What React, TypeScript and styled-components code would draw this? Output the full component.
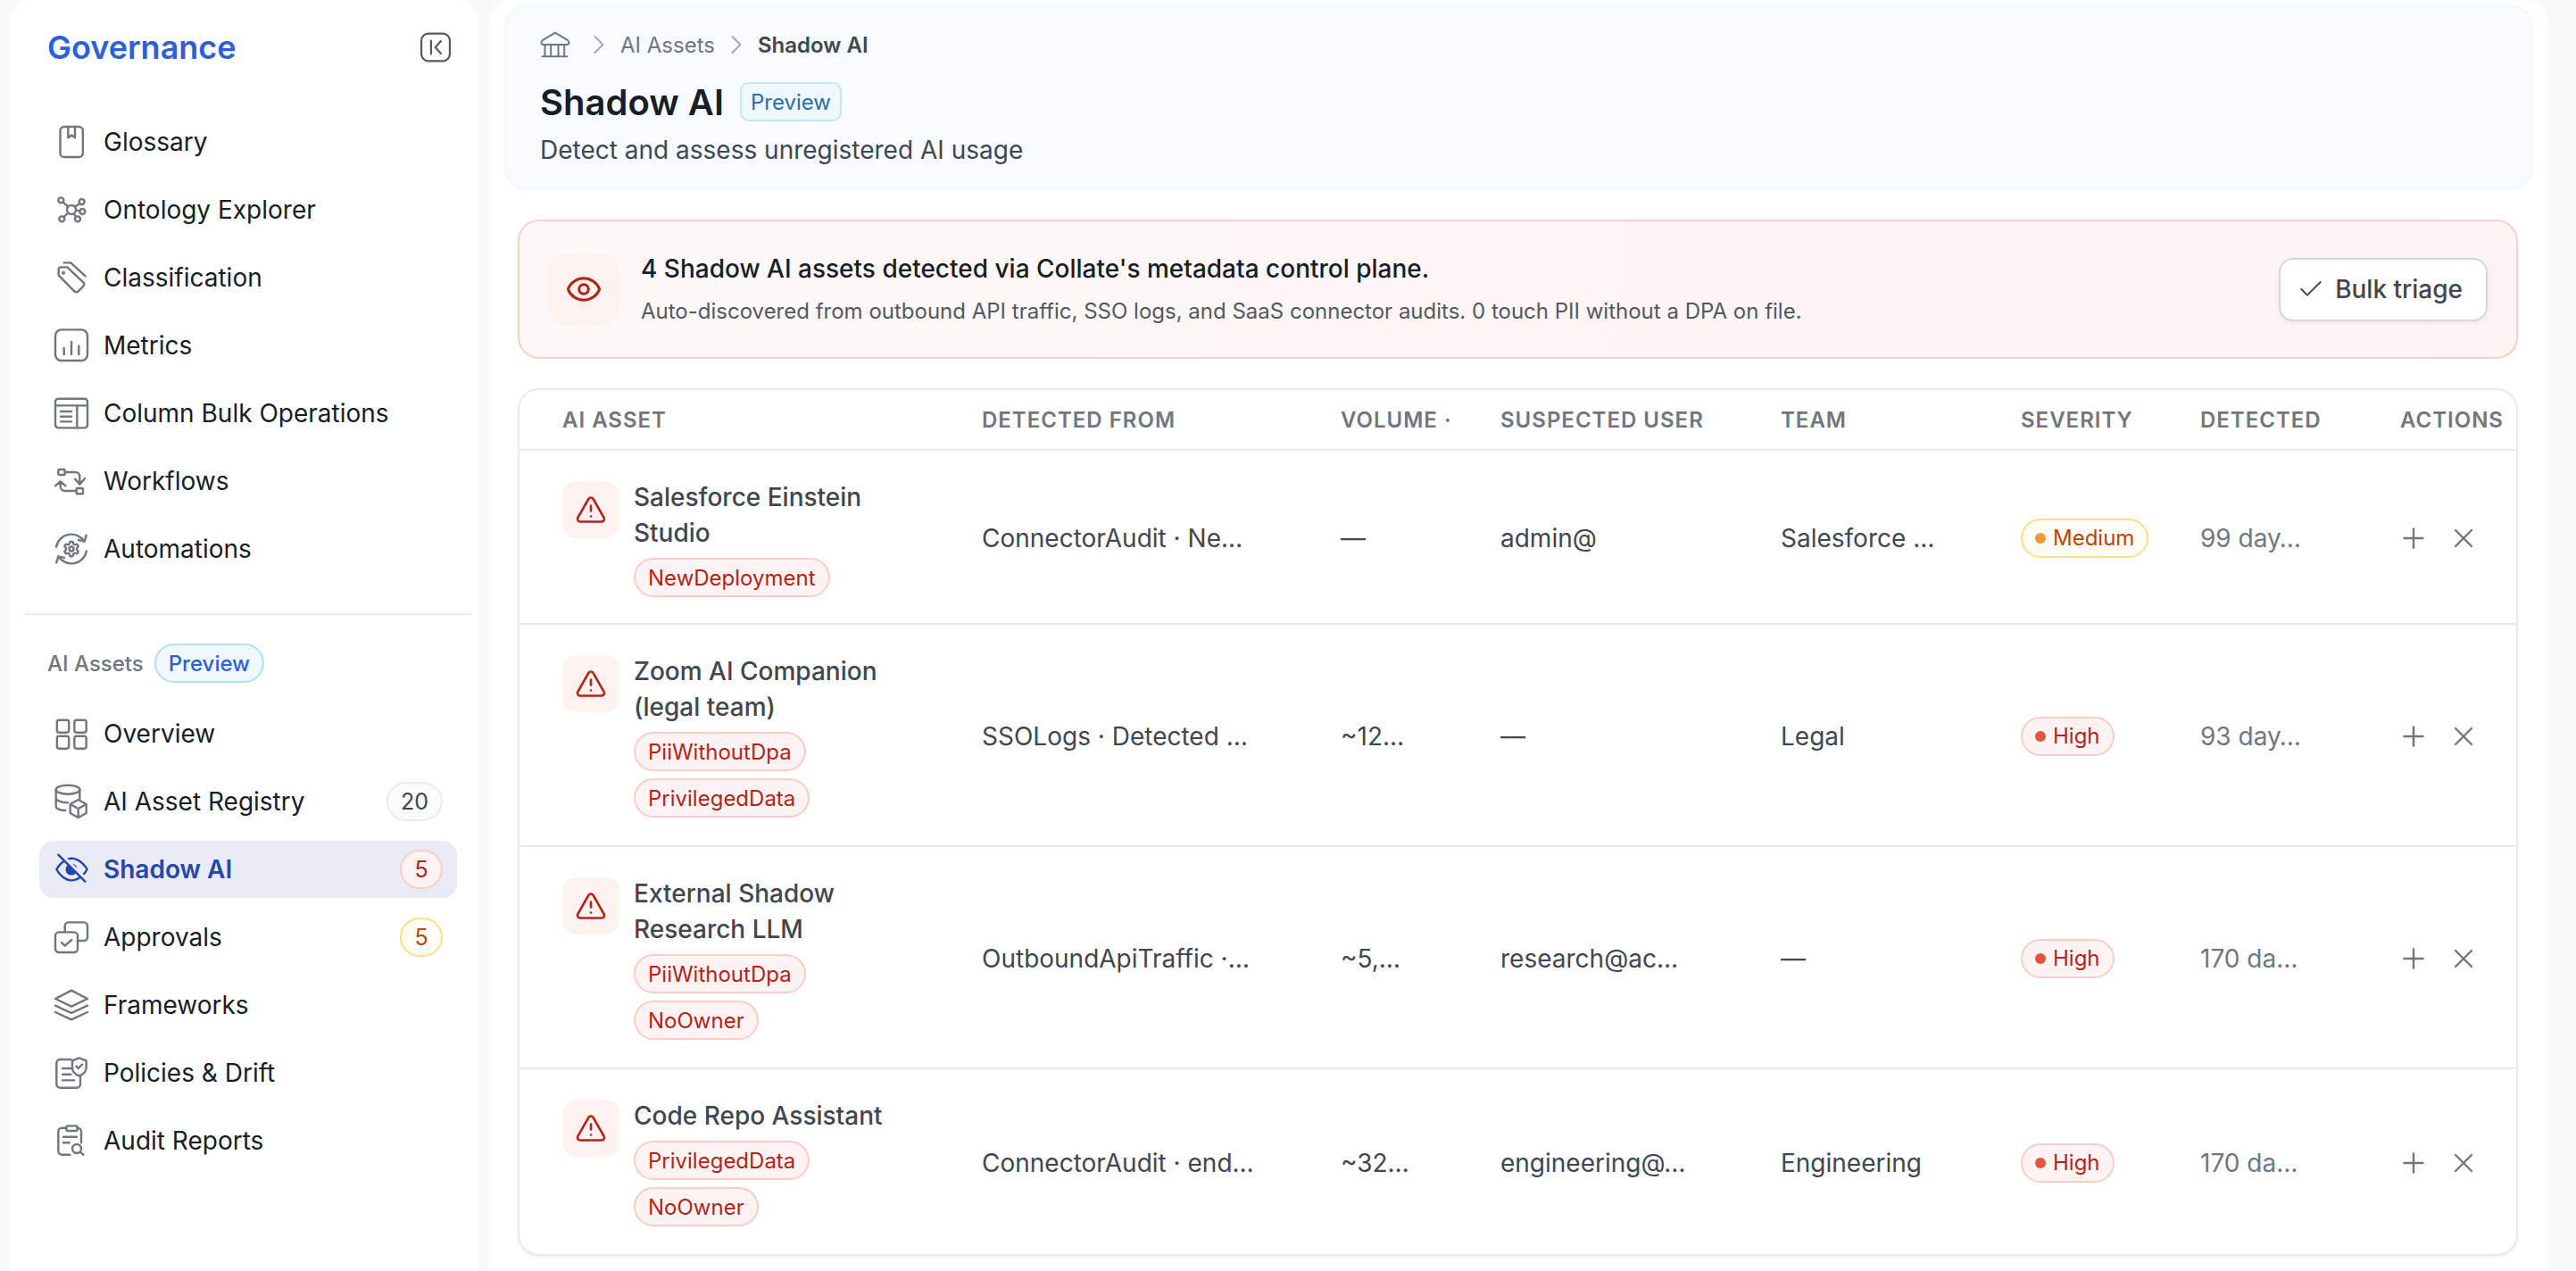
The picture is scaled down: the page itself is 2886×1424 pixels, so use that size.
import React from "react";
import styled, { createGlobalStyle } from "styled-components";
import { Check, ChevronRight, Eye, Plus, Settings, TriangleAlert, X } from "lucide-react";

const Global = createGlobalStyle`
  html, body { margin: 0; padding: 0; background: #f8f9fd; }
  body { font-family: Inter, "Noto Sans", "Liberation Sans", sans-serif; color: #181d27; }
  * { box-sizing: border-box; }
`;

const Shell = styled.div`
  display: flex;
  gap: 12px;
  height: 1424px;
  padding: 0 32px 0 12px;
  overflow: hidden;
  background: #f8f9fd;
`;

const Sidebar = styled.aside`
  flex: 0 0 524px;
  height: 1480px;
  background: #ffffff;
  border-radius: 24px 24px 0 0;
`;

const SideHead = styled.div`
  display: flex;
  align-items: center;
  justify-content: space-between;
  height: 106px;
  padding: 0 30px 0 41px;
  margin-bottom: 21px;
`;

const Brand = styled.div`
  font-size: 36px;
  font-weight: 600;
  color: #2c5fd9;
`;

const NavList = styled.nav`
  display: flex;
  flex-direction: column;
  gap: 12px;
  padding: 0 24px 0 32px;
`;

const NavItem = styled.div<{ $active?: boolean }>`
  display: flex;
  align-items: center;
  gap: 16px;
  height: 64px;
  padding: 0 16px;
  border-radius: 16px;
  font-size: 28px;
  font-weight: ${(p) => (p.$active ? 600 : 400)};
  color: ${(p) => (p.$active ? "#2447ac" : "#181d27")};
  background: ${(p) => (p.$active ? "#e8ebf4" : "transparent")};
  svg.nav-icon { color: ${(p) => (p.$active ? "#2447ac" : "#717680")}; flex: 0 0 40px; }
`;

const NavLabel = styled.span`
  flex: 1;
  white-space: nowrap;
`;

const Divider = styled.hr`
  height: 2px;
  margin: 40px 8px 32px 16px;
  border: 0;
  background: #e9eaeb;
`;

const SectionHead = styled.div`
  display: flex;
  align-items: center;
  gap: 12px;
  height: 44px;
  padding-left: 41px;
  margin-bottom: 25px;
  font-size: 24px;
  font-weight: 500;
  color: #717680;
`;

const PreviewPill = styled.span`
  display: inline-flex;
  align-items: center;
  height: 44px;
  padding: 0 14px;
  border: 2px solid #b2ddff;
  border-radius: 22px;
  background: #eff8ff;
  font-size: 24px;
  font-weight: 500;
  color: #2c5fd9;
`;

const tones = {
  gray: { border: "#e9eaeb", bg: "#fafafa", text: "#414651", dot: "#717680" },
  red: { border: "#f9cdc7", bg: "#fef3f2", text: "#b42318", dot: "#e5533f" },
  amber: { border: "#fedf89", bg: "#fffcf5", text: "#b54708", dot: "#ef9a33" },
};
type Tone = keyof typeof tones;

const Count = styled.span<{ $tone: Tone }>`
  display: inline-flex;
  align-items: center;
  justify-content: center;
  min-width: 48px;
  height: 44px;
  padding: 0 14px;
  border: 2px solid ${(p) => tones[p.$tone].border};
  border-radius: 22px;
  background: ${(p) => tones[p.$tone].bg};
  font-size: 25px;
  font-weight: 400;
  color: ${(p) => tones[p.$tone].text};
`;

const Main = styled.main`
  flex: 1;
  min-width: 0;
  height: 1480px;
  padding-top: 6px;
  background: #ffffff;
  border-radius: 24px 24px 0 0;
`;

const PageHeader = styled.header`
  height: 207px;
  margin: 0 16px 0 17px;
  padding: 24px 38px 0;
  border: 2px solid #f2f7fc;
  border-radius: 24px;
  background: #f7fafe;
`;

const Crumbs = styled.div`
  display: flex;
  align-items: center;
  gap: 6px;
  height: 36px;
  font-size: 24px;
  color: #717680;
  svg { flex: none; }
`;

const CrumbHome = styled.span`
  display: inline-flex;
  margin-right: 8px;
  color: #717680;
`;

const CrumbChevron = styled.span`
  display: inline-flex;
  color: #a4a7ae;
`;

const CrumbCurrent = styled.span`
  font-weight: 600;
  color: #414651;
`;

const TitleRow = styled.div`
  display: flex;
  align-items: center;
  gap: 18px;
  height: 44px;
  margin-top: 24px;
`;

const Title = styled.h1`
  margin: 0;
  font-size: 40px;
  font-weight: 600;
  color: #181d27;
`;

const TitleBadge = styled.span`
  display: inline-flex;
  align-items: center;
  height: 44px;
  padding: 0 10px;
  border: 2px solid #c4e6fb;
  border-radius: 10px;
  background: #eff8ff;
  font-size: 24px;
  color: #2a6cad;
`;

const Subtitle = styled.p`
  margin: 12px 0 0;
  font-size: 28px;
  line-height: 40px;
  color: #414651;
`;

const Content = styled.div`
  display: flex;
  flex-direction: column;
  gap: 33px;
  padding: 33px 33px 0 32px;
`;

const Alert = styled.section`
  display: flex;
  align-items: center;
  gap: 24px;
  height: 156px;
  padding: 0 32px;
  border: 2px solid #f7d0cb;
  border-radius: 24px;
  background: linear-gradient(100deg, #fdf8f7, #fcf3f2);
`;

const AlertIcon = styled.div`
  display: flex;
  align-items: center;
  justify-content: center;
  flex: 0 0 80px;
  height: 80px;
  border-radius: 20px;
  background: #fdf2f0;
  color: #b42318;
`;

const AlertText = styled.div`
  flex: 1;
  min-width: 0;
`;

const AlertTitle = styled.div`
  font-size: 28px;
  line-height: 40px;
  font-weight: 500;
  color: #181d27;
`;

const AlertSub = styled.div`
  margin-top: 10px;
  font-size: 24px;
  line-height: 36px;
  color: #535862;
`;

const TriageButton = styled.button`
  display: inline-flex;
  align-items: center;
  gap: 11px;
  height: 71px;
  padding: 0 26px 0 18px;
  border: 2px solid #d5d7da;
  border-radius: 16px;
  background: #ffffff;
  font-family: inherit;
  font-size: 28px;
  font-weight: 500;
  color: #414651;
  box-shadow: 0 2px 4px rgba(10, 13, 18, 0.05);
`;

const TableCard = styled.div`
  border: 2px solid #e9eaeb;
  border-radius: 24px;
  overflow: hidden;
  background: #ffffff;
  box-shadow: 0 2px 4px rgba(10, 13, 18, 0.06);
`;

const Table = styled.table`
  width: 100%;
  table-layout: fixed;
  border-collapse: separate;
  border-spacing: 0;
`;

const Col = styled.col<{ $w: number }>`
  width: ${(p) => p.$w}px;
`;

const Th = styled.th`
  height: 68px;
  padding: 0 0 0 24px;
  border-bottom: 2px solid #e9eaeb;
  text-align: left;
  font-size: 24px;
  font-weight: 600;
  letter-spacing: 1px;
  color: #717680;
  white-space: nowrap;
  &:first-child { padding-left: 48px; }
`;

const Tr = styled.tr`
  &:last-child td { border-bottom: 0; }
`;

const Td = styled.td<{ $muted?: boolean }>`
  padding: 2px 0 0 24px;
  border-bottom: 2px solid #e9eaeb;
  vertical-align: middle;
  font-size: 28px;
  color: ${(p) => (p.$muted ? "#717680" : "#414651")};
  white-space: nowrap;
`;

const AssetTd = styled.td<{ $single?: boolean }>`
  padding: 32px 0 ${(p) => (p.$single ? 29 : 31)}px 48px;
  border-bottom: 2px solid #e9eaeb;
  vertical-align: top;
`;

const AssetCell = styled.div`
  display: flex;
  gap: 16px;
`;

const AssetIcon = styled.div`
  display: flex;
  align-items: center;
  justify-content: center;
  flex: 0 0 64px;
  height: 64px;
  margin-top: 2px;
  border-radius: 16px;
  background: #fdf2f0;
  color: #b42318;
`;

const AssetBody = styled.div`
  width: 310px;
`;

const AssetName = styled.div`
  font-size: 28px;
  line-height: 40px;
  font-weight: 500;
  color: #414651;
`;

const Tags = styled.div`
  display: flex;
  flex-wrap: wrap;
  gap: 8px;
  margin-top: 8px;
`;

const Tag = styled.span`
  display: inline-flex;
  align-items: center;
  height: 44px;
  padding: 0 14px;
  border: 2px solid #f9cdc7;
  border-radius: 22px;
  background: #fef3f2;
  font-size: 24px;
  color: #b42318;
`;

const Severity = styled.span<{ $tone: Tone }>`
  display: inline-flex;
  align-items: center;
  gap: 8px;
  height: 44px;
  padding: 0 14px;
  border: 2px solid ${(p) => tones[p.$tone].border};
  border-radius: 22px;
  background: ${(p) => tones[p.$tone].bg};
  font-size: 24px;
  color: ${(p) => tones[p.$tone].text};
`;

const Dot = styled.i<{ $tone: Tone }>`
  width: 12px;
  height: 12px;
  border-radius: 50%;
  background: ${(p) => tones[p.$tone].dot};
`;

const Actions = styled.div`
  display: flex;
  gap: 20px;
  margin-left: -3px;
  color: #717680;
`;

type IconProps = { children: React.ReactNode; size?: number };
const Ico = ({ children, size = 40 }: IconProps) => (
  <svg
    className="nav-icon"
    width={size}
    height={size}
    viewBox="0 0 24 24"
    fill="none"
    stroke="currentColor"
    strokeWidth="1.45"
    strokeLinecap="round"
    strokeLinejoin="round"
  >
    {children}
  </svg>
);

const GlossaryIcon = () => (
  <Ico>
    <rect x="4.5" y="1.8" width="15.2" height="20.4" rx="2.6" />
    <path d="M9.8 1.8v7.4l2.3-1.7 2.3 1.7V1.8" />
  </Ico>
);
const OntologyIcon = () => (
  <Ico>
    <circle cx="12" cy="12" r="3" />
    <circle cx="5" cy="5.6" r="1.8" />
    <circle cx="19" cy="6.6" r="1.8" />
    <circle cx="19.4" cy="13.2" r="1.8" />
    <circle cx="5.6" cy="18.2" r="1.8" />
    <circle cx="16.2" cy="18.2" r="1.8" />
    <path d="M6.4 6.9 9.8 10M17.6 7.8 14.3 10.1M15 12.4l2.6.4M9.8 14.1l-2.9 2.8M13.5 14.6l1.6 2.1" />
  </Ico>
);
const ClassificationIcon = () => (
  <Ico>
    <path d="M3.4 10.4V6.6A1.6 1.6 0 0 1 5 5h4.2L20 15.2a1.8 1.8 0 0 1 0 2.6l-3.4 3.4a1.8 1.8 0 0 1-2.6 0z" />
    <circle cx="6.6" cy="8.8" r=".5" />
    <path d="M7 2h4.6l9.8 9" />
  </Ico>
);
const MetricsIcon = () => (
  <Ico>
    <rect x="1.2" y="1.4" width="21.6" height="20.8" rx="4" />
    <path d="M7 13.8v4.2M12 9.6v8.4M17 12.4v5.6" />
  </Ico>
);
const ColumnsIcon = () => (
  <Ico>
    <rect x="1.2" y="2.2" width="21.6" height="19.6" rx="2" />
    <path d="M1.2 6.8h21.6M15.8 6.8v15M4.8 10.8h7.2M4.8 14.2h7.2M4.8 17.6h7.2" />
  </Ico>
);
const WorkflowIcon = () => (
  <Ico>
    <rect x="3.2" y="4.2" width="4.4" height="3.6" rx=".8" />
    <path d="M7.6 6h7a3 3 0 0 1 3 3v5.2M14.4 10.6l3.2 3.6 3.4-4" />
    <rect x="15.4" y="16.8" width="4.4" height="3.8" rx=".8" />
    <path d="M15.4 18.6H7.6a3 3 0 0 1-3-3v-3.4M1.2 15.2l3.4-3 3.4 3" />
  </Ico>
);
const AutomationIcon = () => (
  <Ico>
    <path d="M1.8 10.6A10.4 10.4 0 0 1 20.8 7M22 2.8l-1.2 4.2-4-1" />
    <path d="M22.2 13.4A10.4 10.4 0 0 1 3.2 17M2 21.2 3.2 17l4 1" />
    <Settings x={6} y={6} width={12} height={12} strokeWidth={2.9} />
  </Ico>
);
const OverviewIcon = () => (
  <Ico>
    <rect x="2.3" y="2.8" width="8" height="8.4" rx="1.4" />
    <rect x="14" y="2.8" width="8" height="8.4" rx="1.4" />
    <rect x="2.3" y="13.6" width="8" height="8.4" rx="1.4" />
    <rect x="14" y="13.6" width="8" height="8.4" rx="1.4" />
  </Ico>
);
const RegistryIcon = () => (
  <Ico>
    <ellipse cx="9.6" cy="4" rx="8" ry="3" />
    <path d="M1.6 4v11.4c0 1.3 2.6 2.4 6.4 2.6M1.6 9.6c0 1.7 3.4 3.2 8 3.2M17.6 4v6" />
    <path d="M16.6 10.8l5.4 3v6l-5.4 3-5.4-3v-6zM11.2 13.8l5.4 3 5.4-3M16.6 16.8v6" />
  </Ico>
);
const EyeOffIcon = () => (
  <Ico>
    <path d="M2 12S6 4.6 12.2 4.6 22.6 12 22.6 12s-4 7.4-10.4 7.4S2 12 2 12z" />
    <circle cx="12" cy="12" r="3.2" fill="currentColor" />
    <path d="M4.4 1.6 22.4 19.6" stroke="#e8ebf4" strokeWidth="2.6" />
    <path d="M3.2 2.2 21.2 20.2" />
  </Ico>
);
const ApprovalsIcon = () => (
  <Ico>
    <rect x="1.2" y="8.6" width="15" height="13.6" rx="2.4" />
    <path d="M7.6 8.6V4.4A2.4 2.4 0 0 1 10 2h10.4a2.4 2.4 0 0 1 2.4 2.4v7.6a2.4 2.4 0 0 1-2.4 2.4h-4.2" />
    <path d="M5.4 15.6l2.2 2.2 4.6-4" />
  </Ico>
);
const LayersIcon = () => (
  <Ico>
    <path d="M12 2.2 22.8 7.8 12 13 1.2 7.8z" />
    <path d="M1.2 12.4 12 17.4l10.8-5" />
    <path d="M1.2 16.8 12 21.8l10.8-5" />
  </Ico>
);
const PolicyIcon = () => (
  <Ico>
    <path d="M11.6 3H4.4A2.4 2.4 0 0 0 2 5.4v14.2A2.4 2.4 0 0 0 4.4 22h11.2a2.4 2.4 0 0 0 2.4-2.4V14" />
    <path d="M6 9h5.6M6 13h5.6M6 17h8" />
    <path d="M17.2 2 22 3.8v4.6c0 2.6-2.2 4.6-4.8 5.6-2.6-1-4.6-3-4.6-5.6V3.8z" />
    <path d="M15.2 7.6 16.6 9l2.6-2.6" />
  </Ico>
);
const AuditIcon = () => (
  <Ico>
    <rect x="8.6" y="2" width="7.4" height="3.4" rx="1" />
    <path d="M8.6 3.4H5.6A2.4 2.4 0 0 0 3.2 5.8V19a2.4 2.4 0 0 0 2.4 2.4h5.4M16 3.4h.2a2.4 2.4 0 0 1 2.4 2.4v7.6" />
    <path d="M6.6 9.4h9M6.6 13.4h4" />
    <circle cx="15.6" cy="17.4" r="3" />
    <path d="M17.8 19.6l2.2 1.8" />
  </Ico>
);

const CollapseIcon = () => (
  <svg width="36" height="36" viewBox="0 0 24 24" fill="none" stroke="#535862" strokeWidth="1.45" strokeLinecap="round" strokeLinejoin="round">
    <rect x="1.4" y="1.8" width="21.2" height="20.4" rx="5" />
    <path d="M8.6 7v10M16 7.4 11.8 12l4.2 4.6" />
  </svg>
);

const BankIcon = () => (
  <svg width="34" height="34" viewBox="0 0 24 24" fill="none" stroke="currentColor" strokeWidth="1.4" strokeLinecap="round" strokeLinejoin="round">
    <path d="M12 2.6 22 8.6c1.4 1 1.2 3.4-.6 3.4H2.6C.8 12 .6 9.6 2 8.6z" />
    <path d="M3.9 12v8.5M8.6 12v8.5M14.5 12v8.5M19.2 12v8.5M1.8 21.4h19.7" />
  </svg>
);

const top = [
  { icon: <GlossaryIcon />, label: "Glossary" },
  { icon: <OntologyIcon />, label: "Ontology Explorer" },
  { icon: <ClassificationIcon />, label: "Classification" },
  { icon: <MetricsIcon />, label: "Metrics" },
  { icon: <ColumnsIcon />, label: "Column Bulk Operations" },
  { icon: <WorkflowIcon />, label: "Workflows" },
  { icon: <AutomationIcon />, label: "Automations" },
];

const assets: { icon: React.ReactNode; label: string; active?: boolean; count?: string; tone?: Tone }[] = [
  { icon: <OverviewIcon />, label: "Overview" },
  { icon: <RegistryIcon />, label: "AI Asset Registry", count: "20", tone: "gray" },
  { icon: <EyeOffIcon />, label: "Shadow AI", active: true, count: "5", tone: "red" },
  { icon: <ApprovalsIcon />, label: "Approvals", count: "5", tone: "amber" },
  { icon: <LayersIcon />, label: "Frameworks" },
  { icon: <PolicyIcon />, label: "Policies & Drift" },
  { icon: <AuditIcon />, label: "Audit Reports" },
];

const columns = [
  { label: "AI Asset", w: 494 },
  { label: "Detected From", w: 402 },
  { label: "Volume ·", w: 179 },
  { label: "Suspected User", w: 314 },
  { label: "Team", w: 269 },
  { label: "Severity", w: 201 },
  { label: "Detected", w: 224 },
  { label: "Actions", w: 154 },
];

const rows: { name: string; tags: string[]; source: string; volume: string; user: string; team: string; sev: string; tone: Tone; when: string }[] = [
  { name: "Salesforce Einstein Studio", tags: ["NewDeployment"], source: "ConnectorAudit · Ne…", volume: "—", user: "admin@", team: "Salesforce …", sev: "Medium", tone: "amber", when: "99 day…" },
  { name: "Zoom AI Companion (legal team)", tags: ["PiiWithoutDpa", "PrivilegedData"], source: "SSOLogs · Detected …", volume: "~12…", user: "—", team: "Legal", sev: "High", tone: "red", when: "93 day…" },
  { name: "External Shadow Research LLM", tags: ["PiiWithoutDpa", "NoOwner"], source: "OutboundApiTraffic ·…", volume: "~5,…", user: "research@ac…", team: "—", sev: "High", tone: "red", when: "170 da…" },
  { name: "Code Repo Assistant", tags: ["PrivilegedData", "NoOwner"], source: "ConnectorAudit · end…", volume: "~32…", user: "engineering@…", team: "Engineering", sev: "High", tone: "red", when: "170 da…" },
];

export default function App() {
  return (
    <>
      <Global />
      <Shell>
        <Sidebar>
          <SideHead>
            <Brand>Governance</Brand>
            <CollapseIcon />
          </SideHead>
          <NavList>
            {top.map((n) => (
              <NavItem key={n.label}>
                {n.icon}
                <NavLabel>{n.label}</NavLabel>
              </NavItem>
            ))}
          </NavList>
          <Divider />
          <SectionHead>
            AI Assets
            <PreviewPill>Preview</PreviewPill>
          </SectionHead>
          <NavList>
            {assets.map((n) => (
              <NavItem key={n.label} $active={n.active}>
                {n.icon}
                <NavLabel>{n.label}</NavLabel>
                {n.count && n.tone && <Count $tone={n.tone}>{n.count}</Count>}
              </NavItem>
            ))}
          </NavList>
        </Sidebar>
        <Main>
          <PageHeader>
            <Crumbs>
              <CrumbHome><BankIcon /></CrumbHome>
              <CrumbChevron><ChevronRight size={36} strokeWidth={1.3} /></CrumbChevron>
              <span>AI Assets</span>
              <CrumbChevron><ChevronRight size={36} strokeWidth={1.3} /></CrumbChevron>
              <CrumbCurrent>Shadow AI</CrumbCurrent>
            </Crumbs>
            <TitleRow>
              <Title>Shadow AI</Title>
              <TitleBadge>Preview</TitleBadge>
            </TitleRow>
            <Subtitle>Detect and assess unregistered AI usage</Subtitle>
          </PageHeader>
          <Content>
            <Alert>
              <AlertIcon><Eye size={42} strokeWidth={1.75} /></AlertIcon>
              <AlertText>
                <AlertTitle>4 Shadow AI assets detected via Collate's metadata control plane.</AlertTitle>
                <AlertSub>Auto-discovered from outbound API traffic, SSO logs, and SaaS connector audits. 0 touch PII without a DPA on file.</AlertSub>
              </AlertText>
              <TriageButton><Check size={32} strokeWidth={1.5} />Bulk triage</TriageButton>
            </Alert>
            <TableCard>
              <Table>
                <colgroup>
                  {columns.map((c) => <Col key={c.label} $w={c.w} />)}
                </colgroup>
                <thead>
                  <tr>
                    {columns.map((c) => <Th key={c.label}>{c.label.toUpperCase()}</Th>)}
                  </tr>
                </thead>
                <tbody>
                  {rows.map((r) => (
                    <Tr key={r.name}>
                      <AssetTd $single={r.tags.length === 1}>
                        <AssetCell>
                          <AssetIcon><TriangleAlert size={36} strokeWidth={1.7} /></AssetIcon>
                          <AssetBody>
                            <AssetName>{r.name}</AssetName>
                            <Tags>{r.tags.map((t) => <Tag key={t}>{t}</Tag>)}</Tags>
                          </AssetBody>
                        </AssetCell>
                      </AssetTd>
                      <Td>{r.source}</Td>
                      <Td>{r.volume}</Td>
                      <Td>{r.user}</Td>
                      <Td>{r.team}</Td>
                      <Td><Severity $tone={r.tone}><Dot $tone={r.tone} />{r.sev}</Severity></Td>
                      <Td $muted>{r.when}</Td>
                      <Td>
                        <Actions>
                          <Plus size={36} strokeWidth={1.6} />
                          <X size={36} strokeWidth={1.6} />
                        </Actions>
                      </Td>
                    </Tr>
                  ))}
                </tbody>
              </Table>
            </TableCard>
          </Content>
        </Main>
      </Shell>
    </>
  );
}
